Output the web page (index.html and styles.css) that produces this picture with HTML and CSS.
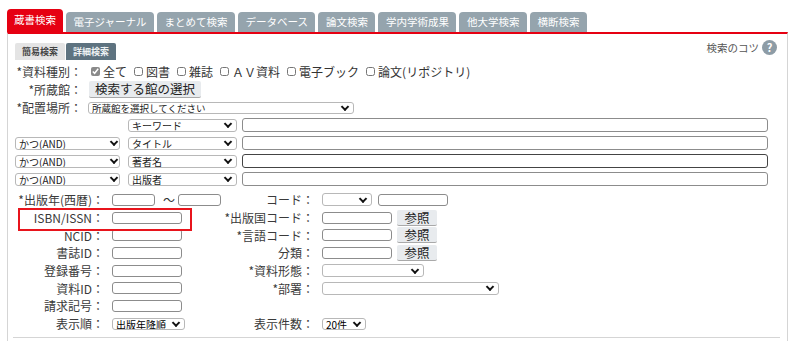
FILE: index.html
```html
<!DOCTYPE html>
<html lang="ja">
<head>
	<meta charset="UTF-8">
	<title>蔵書検索</title>
	<link rel="stylesheet" href="styles.css">
</head>
<body>
	<div class="page">
		<ul class="tabs">
			<li class="tab on">蔵書検索</li>
			<li class="tab">電子ジャーナル</li>
			<li class="tab">まとめて検索</li>
			<li class="tab">データベース</li>
			<li class="tab">論文検索</li>
			<li class="tab">学内学術成果</li>
			<li class="tab">他大学検索</li>
			<li class="tab">横断検索</li>
		</ul>

		<div class="panel">
			<div class="head">
				<div class="modes">
					<span class="mode">簡易検索</span>
					<span class="mode cur">詳細検索</span>
				</div>
				<a class="tips">検索のコツ<span class="q">?</span></a>
			</div>

			<!-- 資料種別・所蔵館・配置場所 -->
			<div class="top">
				<span class="lbl">*資料種別：</span>
				<div class="types">
					<label><input type="checkbox" checked>全て</label>
					<label><input type="checkbox">図書</label>
					<label><input type="checkbox">雑誌</label>
					<label><input type="checkbox">ＡＶ資料</label>
					<label><input type="checkbox">電子ブック</label>
					<label><input type="checkbox">論文(リポジトリ)</label>
				</div>
				<span class="lbl">*所蔵館：</span>
				<div class="cell"><button class="btn lib">検索する館の選択</button></div>
				<span class="lbl">*配置場所：</span>
				<div class="cell"><span class="dd"><select class="sel place"><option>所蔵館を選択してください</option></select></span></div>
			</div>

			<!-- キーワード行 -->
			<div class="terms">
				<span></span>
				<span class="dd"><select class="sel field"><option>キーワード</option></select></span>
				<input type="text" class="txt">

				<span class="dd"><select class="sel op"><option>かつ(AND)</option></select></span>
				<span class="dd"><select class="sel field"><option>タイトル</option></select></span>
				<input type="text" class="txt">

				<span class="dd"><select class="sel op"><option>かつ(AND)</option></select></span>
				<span class="dd"><select class="sel field"><option>著者名</option></select></span>
				<input type="text" class="txt dark">

				<span class="dd"><select class="sel op"><option>かつ(AND)</option></select></span>
				<span class="dd"><select class="sel field"><option>出版者</option></select></span>
				<input type="text" class="txt">
			</div>

			<!-- 詳細条件 -->
			<div class="detail">
				<span class="lbl">*出版年(西暦)：</span>
				<div class="cell"><input type="text" class="txt s year"><span class="tilde">～</span><input type="text" class="txt s year"></div>
				<span class="lbl">コード：</span>
				<div class="cell"><span class="dd code"><select class="sel"><option></option></select></span><input type="text" class="txt s mid"></div>

				<span class="lbl isbn">ISBN/ISSN：</span>
				<div class="cell"><input type="text" class="txt s mid"></div>
				<span class="lbl">*出版国コード：</span>
				<div class="cell"><input type="text" class="txt s mid"><button class="btn ref">参照</button></div>

				<span class="lbl">NCID：</span>
				<div class="cell"><input type="text" class="txt s mid"></div>
				<span class="lbl">*言語コード：</span>
				<div class="cell"><input type="text" class="txt s mid"><button class="btn ref">参照</button></div>

				<span class="lbl">書誌ID：</span>
				<div class="cell"><input type="text" class="txt s mid"></div>
				<span class="lbl">分類：</span>
				<div class="cell"><input type="text" class="txt s mid"><button class="btn ref">参照</button></div>

				<span class="lbl">登録番号：</span>
				<div class="cell"><input type="text" class="txt s mid"></div>
				<span class="lbl">*資料形態：</span>
				<div class="cell"><span class="dd"><select class="sel form"><option></option></select></span></div>

				<span class="lbl">資料ID：</span>
				<div class="cell"><input type="text" class="txt s mid"></div>
				<span class="lbl">*部署：</span>
				<div class="cell"><span class="dd"><select class="sel dept"><option></option></select></span></div>

				<span class="lbl">請求記号：</span>
				<div class="cell"><input type="text" class="txt s mid"></div>
				<span></span>
				<span></span>

				<span class="lbl">表示順：</span>
				<div class="cell"><span class="dd"><select class="sel order"><option>出版年降順</option></select></span></div>
				<span class="lbl">表示件数：</span>
				<div class="cell"><span class="dd"><select class="sel count"><option>20件</option></select></span></div>
			</div>

			<div class="rule"></div>
		</div>
	</div>
</body>
</html>
```

FILE: styles.css
```css
*{
	box-sizing:border-box;
}
body{
	margin:0;
	font-family:"Noto Sans CJK JP","Noto Sans",sans-serif;
	color:#333;
	background:#fff;
}
.page{
	width:788px;
	padding:9px 0 0 7px;
}

/* タブ */
.tabs{
	display:flex;
	align-items:flex-end;
	gap:3px;
	height:23px;
	margin:0;
	padding:0;
	list-style:none;
}
.tab{
	height:20px;
	padding:0 7.5px;
	background:#95a4ad;
	color:#fff;
	font-size:10.5px;
	line-height:20px;
	border-radius:4px 4px 0 0;
	white-space:nowrap;
}
.tab.on{
	height:23px;
	line-height:22px;
	background:#e60012;
	padding:0 7px;
}

/* パネル */
.panel{
	height:320px;
	border-top:2px solid #e60012;
	border-left:1px solid #d5d5d5;
	border-right:1px solid #d5d5d5;
	padding:9px 10px 0 7px;
}
.head{
	display:flex;
	justify-content:space-between;
	height:17px;
}
.modes{
	display:flex;
	gap:1px;
}
.mode{
	height:17px;
	padding:0 7px;
	background:#e4e4e4;
	color:#444;
	font-size:9px;
	font-weight:bold;
	line-height:17px;
	border-radius:2px 2px 0 0;
}
.mode.cur{
	background:#5e7380;
	color:#eef2f4;
}
.tips{
	display:flex;
	align-items:center;
	gap:3px;
	height:15px;
	margin-top:-3px;
	font-size:10.5px;
	color:#555;
}
.q{
	width:15px;
	height:15px;
	border-radius:50%;
	background:#8d9ca6;
	color:#fff;
	font-size:11px;
	font-weight:bold;
	line-height:15px;
	text-align:center;
}

/* ラベル */
.lbl{
	display:flex;
	align-items:center;
	justify-content:flex-end;
	font-size:12px;
	white-space:nowrap;
	color:#3a3a3a;
}
.cell{
	display:flex;
	align-items:center;
}

.top{
	display:grid;
	grid-template-columns:67px auto;
	grid-template-rows:18px 19px 17px;
	column-gap:6px;
	margin-top:2px;
}
.types{
	display:flex;
	align-items:center;
	padding-left:3px;
	font-size:12px;
	color:#333;
}
.types label{
	display:flex;
	align-items:center;
	margin-right:7px;
	white-space:nowrap;
}
.types input{
	width:9px;
	height:9px;
	margin:0 3px 0 0;
	accent-color:#8a8a8a;
}

/* ボタン */
.btn{
	height:17px;
	padding:0 6px;
	border:none;
	border-bottom:1px solid #a9a9a9;
	border-radius:2px;
	background:#e8ebee;
	color:#222;
	font-family:inherit;
	font-size:12.5px;
	line-height:16px;
}
.lib{
	margin-left:1px;
}
.ref{
	width:40px;
	height:16px;
	margin-left:5px;
	padding:0;
}

/* セレクト（矢印は疑似要素で描く） */
.dd{
	position:relative;
	display:inline-flex;
}
.dd::after{
	content:"";
	position:absolute;
	right:6px;
	top:50%;
	width:4px;
	height:4px;
	border-right:2px solid #111;
	border-bottom:2px solid #111;
	transform:translateY(-70%) rotate(45deg);
	pointer-events:none;
}
.sel{
	-webkit-appearance:none;
	appearance:none;
	height:13px;
	padding:0 14px 0 3px;
	border:1px solid #b8b8b8;
	border-radius:3px;
	background:#fff;
	color:#222;
	font-family:inherit;
	font-size:10px;
	line-height:11px;
}
.place{
	width:266px;
	height:12px;
	font-size:9.5px;
	line-height:10px;
}
.txt{
	height:14px;
	padding:0 3px;
	border:1px solid #8c8c8c;
	border-radius:3px;
	background:#fff;
	font-size:10px;
}
.txt.dark{
	border-color:#444;
}
.txt.s{
	height:12px;
}
.year{
	width:43px;
}
.mid{
	width:70px;
}
.tilde{
	margin:0 3px 0 8px;
	font-size:12px;
}

.terms{
	display:grid;
	grid-template-columns:108px 109px 1fr;
	grid-auto-rows:18px;
	column-gap:5px;
	align-items:center;
	margin-right:9px;
}
.op{
	width:105px;
}
.field{
	width:109px;
}

.detail{
	display:grid;
	grid-template-columns:89px 106px 88px auto;
	grid-auto-rows:17.7px;
	column-gap:8px;
	margin-top:3px;
}
.code{
	margin-right:6px;
}
.code select{
	width:50px;
}
.form{
	width:102px;
}
.dept{
	width:177px;
}
.order{
	width:73px;
	height:12px;
	color:#000;
}
.count{
	width:44px;
	height:12px;
	color:#000;
}

/* ISBN/ISSN 強調枠 */
.isbn{
	position:relative;
}
.isbn::before{
	content:"";
	position:absolute;
	left:3px;
	top:-1px;
	width:170px;
	height:19px;
	border:2px solid #e8141c;
	pointer-events:none;
}

.rule{
	margin:4px -3px 0 -2px;
	border-top:1px solid #d5d5d5;
}
```
